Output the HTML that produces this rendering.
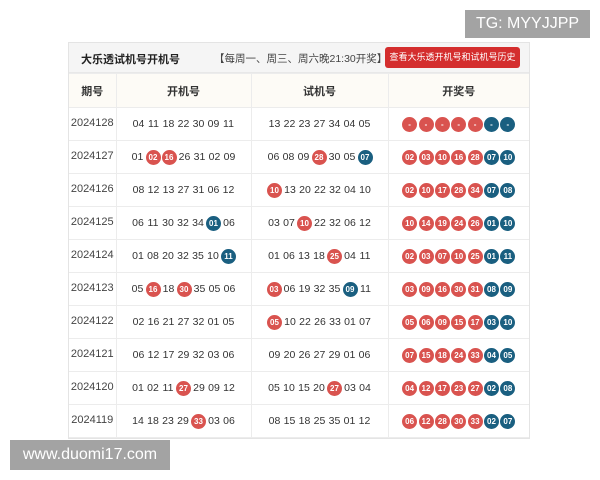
<!DOCTYPE html><html><head><meta charset="utf-8"><style>
*{margin:0;padding:0;box-sizing:border-box}
body{width:600px;height:480px;background:#fff;position:relative;overflow:hidden;font-family:"Liberation Sans","Noto Sans CJK SC",sans-serif;color:#333}
.wm{position:absolute;background:#a3a3a3;color:#fff;font-size:16px;line-height:28px;text-align:center}
.tbl{position:absolute;left:68px;top:42px;width:462px;height:397px;border:1px solid #e4e4e4}
.title{height:30px;background:#f5f5f5;border-bottom:1px solid #e8e8e8;position:relative;font-size:11px}
.title b{position:absolute;left:12px;top:8px;font-size:11px;color:#222}
.title .s{position:absolute;left:145px;top:8px;color:#444;font-size:10.5px}
.title .btn{position:absolute;left:316px;top:4px;width:135px;height:21px;background:#d42e2e;border-radius:3px;color:#fff;font-size:9px;line-height:21px;text-align:center}
table{border-collapse:collapse;width:100%;table-layout:fixed}
td,th{border:1px solid #ececec;text-align:center;font-size:10.5px;color:#333;white-space:nowrap;padding:0}
th{height:34px;background:#fdfbf6;font-weight:bold;font-size:11px;color:#333}
td{height:33px}
td.p{color:#444;vertical-align:top;padding-top:9px;font-size:11px}
tr>*:first-child{border-left:none}
tr>*:last-child{border-right:none}
i{font-style:normal;display:inline-block;width:15px;text-align:center;vertical-align:middle}
i.r,i.b,.w i{width:15px;height:15px;border-radius:50%;background:#d9534f;color:#fff;font-size:8px;line-height:15px;margin:0 0.5px;font-weight:bold}
.w i{margin:0 0.7px}
i.b{background:#1a5f80}
.w i.b{background:#1a5f80}
</style></head><body>
<div class="wm" style="left:465px;top:10px;width:125px">TG: MYYJJPP</div>
<div class="tbl">
<div class="title"><b>大乐透试机号开机号</b><span class="s">【每周一、周三、周六晚21:30开奖】</span><span class="btn">查看大乐透开机号和试机号历史</span></div>
<table>
<colgroup><col style="width:47px"><col style="width:135px"><col style="width:137px"><col></colgroup>
<tr><th>期号</th><th>开机号</th><th>试机号</th><th>开奖号</th></tr>
<tr><td class="p">2024128</td><td><i>04</i><i>11</i><i>18</i><i>22</i><i>30</i><i>09</i><i>11</i></td><td><i>13</i><i>22</i><i>23</i><i>27</i><i>34</i><i>04</i><i>05</i></td><td class="w"><i>-</i><i>-</i><i>-</i><i>-</i><i>-</i><i class="b">-</i><i class="b">-</i></td></tr>
<tr><td class="p">2024127</td><td><i>01</i><i class="r">02</i><i class="r">16</i><i>26</i><i>31</i><i>02</i><i>09</i></td><td><i>06</i><i>08</i><i>09</i><i class="r">28</i><i>30</i><i>05</i><i class="b">07</i></td><td class="w"><i>02</i><i>03</i><i>10</i><i>16</i><i>28</i><i class="b">07</i><i class="b">10</i></td></tr>
<tr><td class="p">2024126</td><td><i>08</i><i>12</i><i>13</i><i>27</i><i>31</i><i>06</i><i>12</i></td><td><i class="r">10</i><i>13</i><i>20</i><i>22</i><i>32</i><i>04</i><i>10</i></td><td class="w"><i>02</i><i>10</i><i>17</i><i>28</i><i>34</i><i class="b">07</i><i class="b">08</i></td></tr>
<tr><td class="p">2024125</td><td><i>06</i><i>11</i><i>30</i><i>32</i><i>34</i><i class="b">01</i><i>06</i></td><td><i>03</i><i>07</i><i class="r">10</i><i>22</i><i>32</i><i>06</i><i>12</i></td><td class="w"><i>10</i><i>14</i><i>19</i><i>24</i><i>26</i><i class="b">01</i><i class="b">10</i></td></tr>
<tr><td class="p">2024124</td><td><i>01</i><i>08</i><i>20</i><i>32</i><i>35</i><i>10</i><i class="b">11</i></td><td><i>01</i><i>06</i><i>13</i><i>18</i><i class="r">25</i><i>04</i><i>11</i></td><td class="w"><i>02</i><i>03</i><i>07</i><i>10</i><i>25</i><i class="b">01</i><i class="b">11</i></td></tr>
<tr><td class="p">2024123</td><td><i>05</i><i class="r">16</i><i>18</i><i class="r">30</i><i>35</i><i>05</i><i>06</i></td><td><i class="r">03</i><i>06</i><i>19</i><i>32</i><i>35</i><i class="b">09</i><i>11</i></td><td class="w"><i>03</i><i>09</i><i>16</i><i>30</i><i>31</i><i class="b">08</i><i class="b">09</i></td></tr>
<tr><td class="p">2024122</td><td><i>02</i><i>16</i><i>21</i><i>27</i><i>32</i><i>01</i><i>05</i></td><td><i class="r">05</i><i>10</i><i>22</i><i>26</i><i>33</i><i>01</i><i>07</i></td><td class="w"><i>05</i><i>06</i><i>09</i><i>15</i><i>17</i><i class="b">03</i><i class="b">10</i></td></tr>
<tr><td class="p">2024121</td><td><i>06</i><i>12</i><i>17</i><i>29</i><i>32</i><i>03</i><i>06</i></td><td><i>09</i><i>20</i><i>26</i><i>27</i><i>29</i><i>01</i><i>06</i></td><td class="w"><i>07</i><i>15</i><i>18</i><i>24</i><i>33</i><i class="b">04</i><i class="b">05</i></td></tr>
<tr><td class="p">2024120</td><td><i>01</i><i>02</i><i>11</i><i class="r">27</i><i>29</i><i>09</i><i>12</i></td><td><i>05</i><i>10</i><i>15</i><i>20</i><i class="r">27</i><i>03</i><i>04</i></td><td class="w"><i>04</i><i>12</i><i>17</i><i>23</i><i>27</i><i class="b">02</i><i class="b">08</i></td></tr>
<tr><td class="p">2024119</td><td><i>14</i><i>18</i><i>23</i><i>29</i><i class="r">33</i><i>03</i><i>06</i></td><td><i>08</i><i>15</i><i>18</i><i>25</i><i>35</i><i>01</i><i>12</i></td><td class="w"><i>06</i><i>12</i><i>28</i><i>30</i><i>33</i><i class="b">02</i><i class="b">07</i></td></tr>
</table>
</div>
<div class="wm" style="left:10px;top:440px;width:160px;height:30px;line-height:30px">www.duomi17.com</div>
</body></html>
